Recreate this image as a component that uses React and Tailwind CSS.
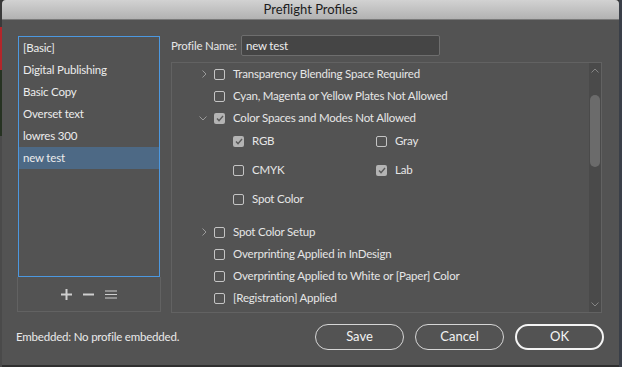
import React from "react";

const font = { fontFamily: "Lato, 'Open Sans', sans-serif" };

function Box({ checked }) {
  return checked ? (
    <span className="flex h-[11px] w-[11px] shrink-0 items-center justify-center rounded-[2px] bg-[#b4b4b4]">
      <svg width="8" height="7" viewBox="0 0 8 7">
        <path d="M1 3.6 L3 5.6 L7 1" fill="none" stroke="#5a5a5a" strokeWidth="1.4" />
      </svg>
    </span>
  ) : (
    <span className="block h-[11px] w-[11px] shrink-0 rounded-[2px] border border-[#c4c4c4]" />
  );
}

function Chevron({ open }) {
  return open ? (
    <svg width="8" height="5" viewBox="0 0 8 5" className="ml-[27px] mr-[7px]">
      <path d="M0.5 0.5 L4 4 L7.5 0.5" fill="none" stroke="#9a9a9a" strokeWidth="1" />
    </svg>
  ) : (
    <svg width="5" height="8" viewBox="0 0 5 8" className="ml-[30px] mr-[7px]">
      <path d="M0.5 0.5 L4 4 L0.5 7.5" fill="none" stroke="#9a9a9a" strokeWidth="1" />
    </svg>
  );
}

function Row({ label, chevron, open, checked }) {
  return (
    <div className="flex h-[22px] items-center">
      {chevron ? <Chevron open={open} /> : <span className="w-[42px]" />}
      <Box checked={checked} />
      <span className="ml-[8px] whitespace-nowrap text-[11.5px] tracking-[-0.2px] text-[#e6e6e6]">{label}</span>
    </div>
  );
}

function Sub({ label, checked }) {
  return (
    <div className="flex h-[24px] items-center">
      <Box checked={checked} />
      <span className="ml-[8px] text-[11.5px] tracking-[-0.2px] text-[#e6e6e6]">{label}</span>
    </div>
  );
}

const profiles = ["[Basic]", "Digital Publishing", "Basic Copy", "Overset text", "lowres 300", "new test"];

export default function App() {
  return (
    <div className="flex h-[367px] w-[622px] bg-[#2f2f2f]" style={font}>
      <div className="flex w-[2px] flex-col">
        <div className="h-[27px] bg-[#3a3a3a]" />
        <div className="h-[43px] bg-[#b3262b]" />
        <div className="h-[66px] bg-[#263222]" />
        <div className="flex-1 bg-[#4a4a4a]" />
      </div>
      <div className="flex h-[365px] w-[617px] flex-col rounded-t-[4px] bg-[#535353]">
        <div className="flex h-[20px] items-center justify-center rounded-t-[4px] border-b border-[#7a7a7a] bg-gradient-to-b from-[#d2d2d2] to-[#b2b2b2] text-[13px] text-[#1c1c1c]">
          Preflight Profiles
        </div>
        <div className="flex">
          <div className="ml-[15px] mt-[16px] flex w-[144px] flex-col">
            <div className="mx-[1px] h-[241px] border border-[#4c98e0]">
              {profiles.map((p, i) => (
                <div
                  key={p}
                  className={`flex h-[22px] items-center pl-[4px] text-[11.5px] tracking-[-0.2px] text-[#ececec] ${i === 5 ? "bg-[#4d6985]" : ""}`}
                >
                  {p}
                </div>
              ))}
            </div>
            <div className="flex h-[35px] items-center justify-center gap-[11px] border border-t-0 border-[#626262]">
              <svg width="11" height="11" viewBox="0 0 11 11">
                <path d="M5.5 0 V11 M0 5.5 H11" stroke="#cfcfcf" strokeWidth="2" />
              </svg>
              <svg width="11" height="11" viewBox="0 0 11 11">
                <path d="M0 5.5 H11" stroke="#cfcfcf" strokeWidth="2" />
              </svg>
              <svg width="12" height="9" viewBox="0 0 12 9">
                <path d="M0 1 H12 M0 4.5 H12 M0 8 H12" stroke="#cfcfcf" strokeWidth="1" />
              </svg>
            </div>
          </div>
          <div className="ml-[10px] mt-[15px] flex w-[431px] flex-col">
            <div className="flex h-[21px] items-center">
              <span className="w-[70px] whitespace-nowrap text-[11.5px] tracking-[-0.2px] text-[#e6e6e6]">Profile Name:</span>
              <div className="flex h-[21px] w-[199px] items-center rounded-[2px] border border-[#6e6e6e] bg-[#454545] pl-[4px] text-[11.5px] tracking-[-0.2px] text-[#eeeeee]">
                new test
              </div>
            </div>
            <div className="mt-[6px] flex h-[251px] border border-[#626262]">
              <div className="flex-1 overflow-hidden">
                <Row label="Transparency Blending Space Required" chevron />
                <Row label="Cyan, Magenta or Yellow Plates Not Allowed" />
                <Row label="Color Spaces and Modes Not Allowed" chevron open checked />
                <div className="ml-[61px] grid w-[200px] grid-cols-[143px_1fr] gap-y-[5px]">
                  <Sub label="RGB" checked />
                  <Sub label="Gray" />
                  <Sub label="CMYK" />
                  <Sub label="Lab" checked />
                  <Sub label="Spot Color" />
                </div>
                <div className="mt-[10px]">
                  <Row label="Spot Color Setup" chevron />
                  <Row label="Overprinting Applied in InDesign" />
                  <Row label="Overprinting Applied to White or [Paper] Color" />
                  <Row label="[Registration] Applied" />
                </div>
              </div>
              <div className="flex w-[12px] flex-col items-center bg-[#4a4a4a]">
                <svg width="8" height="5" viewBox="0 0 8 5" className="mt-[5px]">
                  <path d="M0.5 4.5 L4 1 L7.5 4.5" fill="none" stroke="#858585" strokeWidth="1" />
                </svg>
                <div className="mt-[22px] h-[72px] w-[10px] rounded-full bg-[#6b6b6b]" />
                <div className="flex-1" />
                <svg width="8" height="5" viewBox="0 0 8 5" className="mb-[5px]">
                  <path d="M0.5 0.5 L4 4 L7.5 0.5" fill="none" stroke="#858585" strokeWidth="1" />
                </svg>
              </div>
            </div>
          </div>
        </div>
        <div className="mt-[11px] flex items-center">
          <span className="ml-[14px] w-[299px] text-[11.5px] tracking-[-0.2px] text-[#eaeaea]">Embedded: No profile embedded.</span>
          <button className="h-[26px] w-[89px] rounded-full border border-[#d6d6d6] text-[13px] text-[#f2f2f2]">Save</button>
          <button className="ml-[11px] h-[26px] w-[89px] rounded-full border border-[#d6d6d6] text-[13px] text-[#f2f2f2]">Cancel</button>
          <button className="ml-[11px] h-[26px] w-[89px] rounded-full border-2 border-[#f4f4f4] text-[13px] text-[#f6f6f6]">OK</button>
        </div>
      </div>
      <div className="w-[3px] bg-[#3a3f48]" />
    </div>
  );
}
